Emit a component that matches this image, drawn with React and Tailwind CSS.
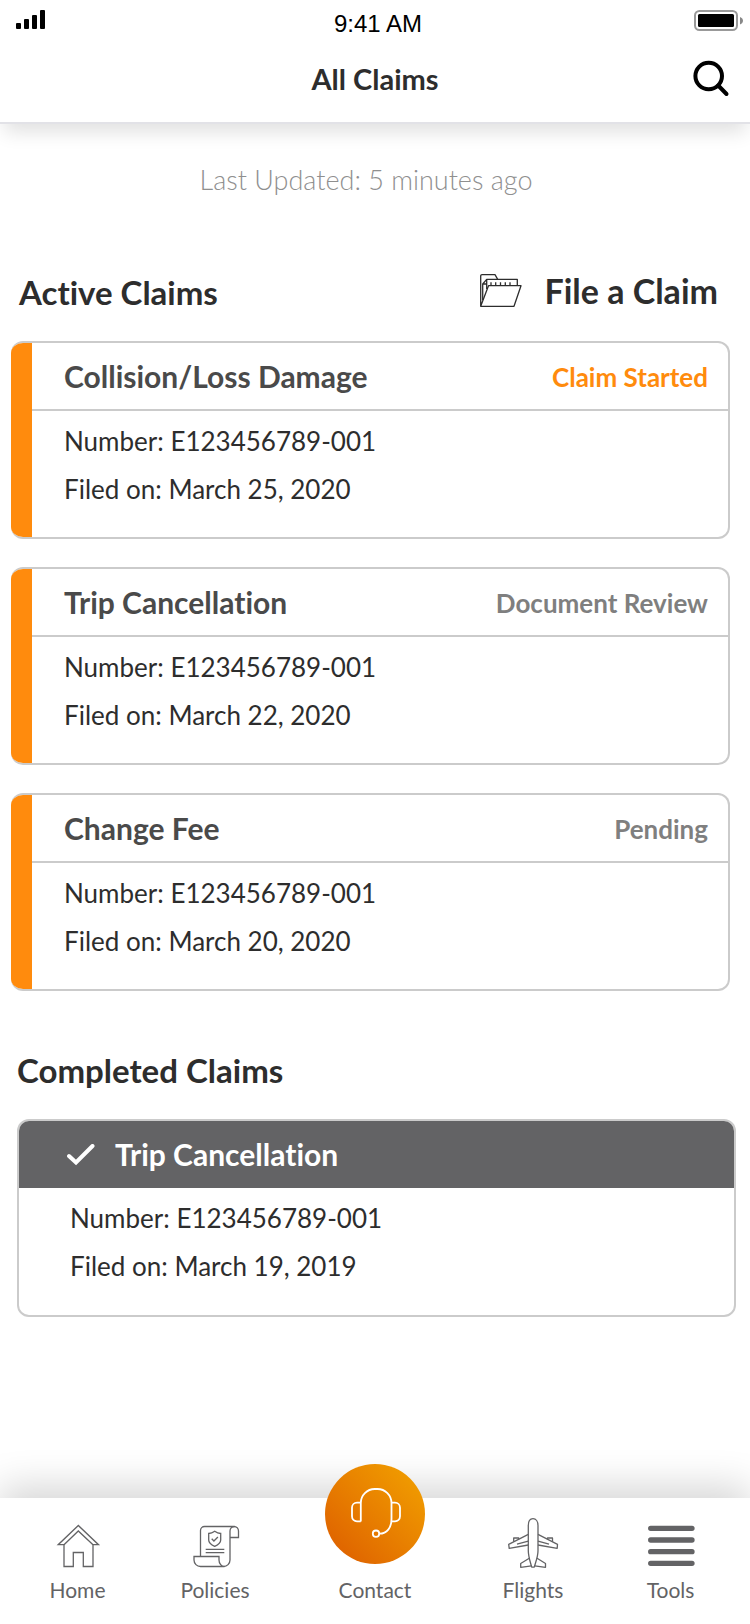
import { useState } from 'react'

const activeClaims = [
  { title: 'Collision/Loss Damage', status: 'Claim Started', number: 'E123456789-001', filed: 'March 25, 2020', highlight: true },
  { title: 'Trip Cancellation', status: 'Document Review', number: 'E123456789-001', filed: 'March 22, 2020' },
  { title: 'Change Fee', status: 'Pending', number: 'E123456789-001', filed: 'March 20, 2020' },
]

const SignalIcon = () => (
  <svg width="30" height="20" viewBox="0 0 30 20">
    <rect x="0" y="13" width="5" height="6" rx="1" />
    <rect x="8" y="9" width="5" height="10" rx="1" />
    <rect x="16" y="5" width="5" height="14" rx="1" />
    <rect x="24" y="0" width="5" height="19" rx="1" />
  </svg>
)

const BatteryIcon = () => (
  <svg width="50" height="22" viewBox="0 0 50 22">
    <rect x="1" y="1" width="42" height="19" rx="4.5" fill="none" stroke="#999" strokeWidth="2" />
    <rect x="4" y="4" width="36" height="13" rx="1.5" />
    <path d="M46 7c4 1.500 4 6 0 7.500z" fill="#888" />
  </svg>
)

const SearchIcon = () => (
  <svg width="38" height="38" viewBox="0 0 38 38" fill="none" stroke="#000" strokeWidth="4" strokeLinecap="round">
    <circle cx="16.700" cy="16" r="13.300" />
    <path d="M26.200 25.500l8.300 8.500" />
  </svg>
)

const FolderIcon = () => (
  <svg width="46" height="38" viewBox="0 0 46 38" fill="none" stroke="#2d2d2d" strokeWidth="1.300" strokeLinejoin="round">
    <path d="M19.700 7.300L17 2.700H4a1.300 1.300 0 0 0-1.300 1.300v30.300L10.500 13.700H43L36 34.300H2.700" />
    <path d="M39.300 13.700V7.300H8.700L4.700 12v16M8.700 7.300V12h-4M8.700 12v5" />
    <path d="M13 10.300v3.400M17.700 10.300v3.400M22.500 10.300v3.400M27.300 10.300v3.400M32 10.300v3.400" />
  </svg>
)

const CheckIcon = () => (
  <svg width="28" height="22" viewBox="0 0 28 22" fill="none" stroke="#fff" strokeWidth="4">
    <path d="M2 12l7 6.500L25.500 2" strokeLinecap="round" />
  </svg>
)

const HomeIcon = () => (
  <svg className="size-[52px]" viewBox="0 0 52 52" fill="none" stroke="#636365" strokeWidth="1.300">
    <path d="M26.300 9.500L6.200 28.700H12V50.500H21.300V36.500H31.300V50.500H41V28.700H46.500Z" />
    <path d="M12 28.700L26.300 15L41 28.700" />
  </svg>
)

const PoliciesIcon = () => (
  <svg className="size-[52px]" viewBox="0 0 52 52" fill="none" stroke="#636365" strokeWidth="1.300">
    <path d="M11.500 40.500V14.500a4 4 0 0 1 4-4H45a4.500 4.500 0 0 1 4.500 4.500V21.500H41" />
    <path d="M45.500 10.500a4.500 4.500 0 0 0-4.500 4.500V44a6.500 6.500 0 0 1-6.500 6.500H11.500A6.500 6.500 0 0 1 5 44V40.500H30V44a5.500 6.500 0 0 0 5.500 6.500" />
    <path d="M25.700 15.300c2 1.500 4 2.200 6 2.200v6.500c0 2.700-3 5-6 6.300c-3-1.300-6-3.600-6-6.300v-6.500c2 0 4-.7 6-2.200z" />
    <path d="M22.700 22.800l2.200 2.200l4-4M16.700 33.300h18.600M16.700 36.700h18.600" />
  </svg>
)

const HeadsetIcon = () => (
  <svg viewBox="0 0 100 100" fill="none" stroke="#fff" strokeWidth="1.800">
    <path d="M35.800 57.500V39a14 14 0 0 1 14-14h2.700a14 14 0 0 1 14 14v16c0 8-4 14.700-12.300 14.700" />
    <path d="M35.800 38.700h-3.800a5 5 0 0 0-5 5v8.600a5 5 0 0 0 5 5h3.800M66.500 38.700h3.500a5 5 0 0 1 5 5v8.600a5 5 0 0 1-5 5h-3.500" />
    <circle cx="51" cy="69.700" r="3.200" />
  </svg>
)

const FlightsIcon = () => (
  <svg className="size-[52px]" viewBox="0 0 52 52" fill="none" stroke="#636365" strokeWidth="1.300" strokeLinejoin="round">
    <path d="M26 2.700c-3 0-4.700 3-4.700 7v25c0 6 2 11 3.400 16.500h2.600c1.400-5.500 3.700-10.500 3.700-16.500v-25c0-4-2-7-5-7z" />
    <path d="M21.300 18.300L1.700 28.300l.5 4L21.300 29M31 18.300l19.500 10l-.3 4L31 29" />
    <path d="M6.700 25.700V22h5v1.200M45.500 25.700V22h-5v1.200M10 28.200l11.300-3M42 28.200l-11-3" />
    <path d="M22.700 42l-9 5.500v3.800l10.800-1.500M29.700 42l8.800 5.500v3.800l-10.800-1.500" />
  </svg>
)

const ToolsIcon = () => (
  <svg className="size-[52px]" viewBox="0 0 52 52" stroke="#636365" strokeWidth="5.300" strokeLinecap="round">
    <path d="M5.700 12.300h41.300M5.700 24h41.300M5.700 35.700h41.300M5.700 47.300h41.300" />
  </svg>
)

const ClaimDetails = ({ number, filed }) => (
  <div className="px-8 pt-[6px] pb-6 text-[26px] leading-12 text-[#2d2d2d]">
    <p>Number: {number}</p>
    <p>Filed on: {filed}</p>
  </div>
)

const ClaimCard = ({ claim }) => (
  <article className="flex h-[198px] overflow-hidden rounded-xl border-2 border-l-0 border-[#cbcbcb]">
    <div className="w-[21px] shrink-0 bg-[#ff8b0d]" />
    <div className="flex-1">
      <div className="flex h-[68px] items-center justify-between border-b-2 border-[#cbcbcb] pr-5 pl-8">
        <h3 className="text-[30px] font-bold text-[#4a4a4a]">{claim.title}</h3>
        <span className={`pt-[2px] text-[26px] font-bold ${claim.highlight ? 'text-[#ff8b0d]' : 'text-[#7f7f7f]'}`}>
          {claim.status}
        </span>
      </div>
      <ClaimDetails number={claim.number} filed={claim.filed} />
    </div>
  </article>
)

const NavItem = ({ label, icon, active, onClick }) => (
  <button
    onClick={onClick}
    aria-current={active ? 'page' : undefined}
    className="flex cursor-pointer flex-col items-center gap-[6px] pt-[18px] text-[21px] leading-8 text-[#636365]"
  >
    {icon}
    {label}
  </button>
)

const App = () => {
  const [tab, setTab] = useState('')

  return (
    <div className="flex min-h-screen flex-col bg-white font-[Lato,sans-serif] text-[#2d2d2d] [font-variant-ligatures:none]">
      <header className="border-b-2 border-[#e2e2e7] bg-white shadow-[0_12px_18px_-4px_rgba(0,0,0,0.12)]">
        <div className="grid h-10 grid-cols-[1fr_auto_1fr] items-start pr-[6px] pl-3 pt-[10px] text-black">
          <div className="pl-1">
            <SignalIcon />
          </div>
          <p className="text-center font-['Liberation_Sans',sans-serif] text-2xl leading-7">9:41 AM</p>
          <div className="flex justify-end">
            <BatteryIcon />
          </div>
        </div>
        <div className="grid h-[82px] grid-cols-[1fr_auto_1fr] items-center px-5 pb-1">
          <h1 className="col-start-2 text-[29px] font-bold">All Claims</h1>
          <button aria-label="Search" className="cursor-pointer justify-self-end">
            <SearchIcon />
          </button>
        </div>
      </header>

      <main className="flex-1">
        <p className="mt-9 pr-[18px] text-center text-[27px] leading-10 font-light text-[#8f8f8f]">
          Last Updated: 5 minutes ago
        </p>

        <section className="pr-5 pl-[11px]">
          <div className="mt-[66px] mb-[22px] flex h-[53px] items-center justify-between pr-3 pl-2">
            <h2 className="text-[33px] font-bold">Active Claims</h2>
            <button className="flex cursor-pointer items-center gap-5 pb-1 text-[34px] font-bold">
              <FolderIcon />
              File a Claim
            </button>
          </div>
          <div className="flex flex-col gap-7">
            {activeClaims.map((claim) => (
              <ClaimCard key={claim.title} claim={claim} />
            ))}
          </div>
        </section>

        <section className="mt-[59px] pr-[14px] pl-[17px]">
          <h2 className="mb-[29px] text-[33px] leading-10 font-bold">Completed Claims</h2>
          <article className="h-[198px] overflow-hidden rounded-xl border-2 border-[#cbcbcb]">
            <div className="flex h-[67px] items-center gap-5 bg-[#636365] px-12 text-white">
              <CheckIcon />
              <h3 className="text-[30px] font-bold">Trip Cancellation</h3>
            </div>
            <div className="pl-[19px]">
              <ClaimDetails number="E123456789-001" filed="March 19, 2019" />
            </div>
          </article>
        </section>
      </main>

      <nav className="grid h-[126px] grid-cols-[155fr_120fr_200fr_116fr_159fr] items-start bg-white shadow-[0_-12px_36px_rgba(0,0,0,0.16)]">
        <NavItem label="Home" icon={<HomeIcon />} active={tab === 'Home'} onClick={() => setTab('Home')} />
        <NavItem label="Policies" icon={<PoliciesIcon />} active={tab === 'Policies'} onClick={() => setTab('Policies')} />
        <button
          onClick={() => setTab('Contact')}
          className="-mt-[34px] flex cursor-pointer flex-col items-center gap-[10px] text-[21px] leading-8 text-[#636365]"
        >
          <span className="size-[100px] rounded-full bg-linear-to-tr from-[#dc5a00] to-[#f2a300]">
            <HeadsetIcon />
          </span>
          Contact
        </button>
        <NavItem label="Flights" icon={<FlightsIcon />} active={tab === 'Flights'} onClick={() => setTab('Flights')} />
        <NavItem label="Tools" icon={<ToolsIcon />} active={tab === 'Tools'} onClick={() => setTab('Tools')} />
      </nav>
    </div>
  )
}

export default App
